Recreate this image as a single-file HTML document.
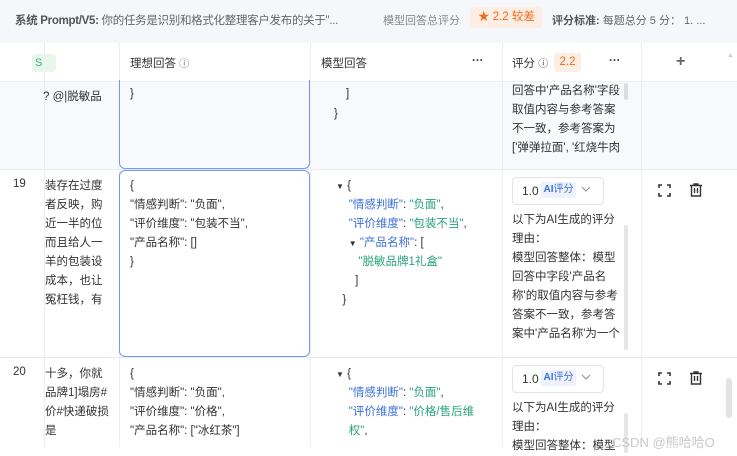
<!DOCTYPE html>
<html><head><meta charset="utf-8"><style>
*{margin:0;padding:0;box-sizing:border-box}
body{width:737px;height:447px;overflow:hidden;background:#fff;font-family:"Liberation Sans","Noto Sans CJK SC",sans-serif;font-size:11.5px;color:#333;position:relative}
.a{position:absolute;white-space:nowrap}
.top{position:absolute;left:0;top:0;width:737px;height:43px;background:#f5f7fa}
.vl{position:absolute;width:1px;background:#eceef2}
.hl{position:absolute;height:1px;background:#e8eaee}
.k{color:#3a6fd8}.v{color:#26a37a}
.ln{line-height:19px}
</style></head><body>
<div class="top"></div>
<div class="a" style="left:15px;top:12px;font-size:11.5px;color:#555;letter-spacing:-0.3px"><b style="color:#555">系统 Prompt/V5:</b> <span style="color:#666">你的任务是识别和格式化整理客户发布的关于"...</span></div>
<div class="a" style="left:383px;top:12px;font-size:11px;color:#888">模型回答总评分</div>
<div class="a" style="left:470px;top:7px;width:72px;height:21px;background:#fdeee3;border-radius:4px;color:#f06a1e;font-size:11.5px;line-height:21px;padding-left:8px;overflow:hidden">★ 2.2 较差</div>
<div class="a" style="left:552px;top:12px;font-size:11px;color:#555"><b>评分标准:</b> <span style="color:#666">每题总分 5 分：  1. ...</span></div>

<div class="a" style="left:0;top:43px;width:737px;height:38px;background:#fff"></div>
<div class="a" style="left:0;top:81px;width:737px;height:88px;background:#f8f9fb"></div>
<div class="hl" style="left:0;top:81px;width:737px;background:#f0f1f4"></div>
<div class="hl" style="left:0;top:169px;width:737px"></div>
<div class="hl" style="left:0;top:357px;width:737px"></div>
<div class="vl" style="left:44px;top:43px;height:404px"></div>
<div class="vl" style="left:119px;top:43px;height:404px"></div>
<div class="vl" style="left:310px;top:43px;height:404px"></div>
<div class="vl" style="left:502px;top:43px;height:404px"></div>
<div class="vl" style="left:641px;top:43px;height:404px"></div>

<div class="a" style="left:32px;top:54px;width:24px;height:18px;background:#e8f6ee;border-radius:3px;color:#36b37e;font-size:11px;line-height:18px;padding-left:3px">S</div>
<div class="a" style="left:130px;top:55px">理想回答 <span style="font-size:10px;color:#666">ⓘ</span></div>
<div class="a" style="left:321px;top:55px">模型回答</div>
<div class="a" style="left:472px;top:55px;font-weight:bold">···</div>
<div class="a" style="left:512px;top:55px">评分 <span style="font-size:10px">ⓘ</span></div>
<div class="a" style="left:554px;top:53px;width:27px;height:19px;background:#fdeee3;border-radius:3px;color:#f06a1e;line-height:19px;text-align:center">2.2</div>
<div class="a" style="left:609px;top:55px;font-weight:bold">···</div>
<div class="a" style="left:676px;top:53px;font-size:16px;color:#666;font-weight:bold">+</div>
<div class="a" style="left:727px;top:52px;font-size:7px;color:#ccc">▲</div>

<div class="a" style="left:43px;top:88px">? @|脱敏品</div>
<div class="a" style="left:119px;top:80px;width:191px;height:89px;border:1.5px solid #6f9cf0;border-top:none;border-radius:0 0 6px 6px"></div>
<div class="a" style="left:130px;top:88px">}</div>
<div class="a" style="left:346px;top:88px">]</div>
<div class="a" style="left:334px;top:108px">}</div>
<div class="a ln" style="left:512px;top:82px">回答中'产品名称'字段<br>取值内容与参考答案<br>不一致，参考答案为<br>['弹弹拉面', '红烧牛肉</div>
<div class="a" style="left:624px;top:83px;width:4px;height:17px;background:#ddd;border-radius:2px"></div>

<div class="a" style="left:13px;top:178px">19</div>
<div class="a ln" style="left:45px;top:177px;width:74px;overflow:hidden">装存在过度<br>者反映，购<br>近一半的位<br>而且给人一<br>羊的包装设<br>成本，也让<br>冤枉钱，有</div>
<div class="a" style="left:119px;top:170px;width:191px;height:187px;border:1.5px solid #6f9cf0;border-radius:6px"></div>
<div class="a ln" style="left:130px;top:177px">{<br>"情感判断": "负面",<br>"评价维度": "包装不当",<br>"产品名称": []<br>}</div>
<div class="a ln" style="left:336px;top:177px"><span style="font-size:8px">▼</span> {<br>&nbsp;&nbsp;&nbsp;&nbsp;<span class="k">"情感判断"</span>: <span class="v">"负面"</span>,<br>&nbsp;&nbsp;&nbsp;&nbsp;<span class="k">"评价维度"</span>: <span class="v">"包装不当"</span>,<br>&nbsp;&nbsp;&nbsp;&nbsp;<span style="font-size:8px">▼</span> <span class="k">"产品名称"</span>: [<br>&nbsp;&nbsp;&nbsp;&nbsp;&nbsp;&nbsp;&nbsp;<span class="v">"脱敏品牌1礼盒"</span><br>&nbsp;&nbsp;&nbsp;&nbsp;&nbsp;&nbsp;]<br>&nbsp;&nbsp;}</div>
<div class="a" style="left:512px;top:177px;width:92px;height:28px;border:1px solid #e2e4e8;border-radius:4px"></div>
<div class="a" style="left:522px;top:184px;font-size:12px">1.0</div>
<div class="a" style="left:541px;top:182px;width:35px;height:16px;background:#eef2fd;color:#3a6fd8;font-size:10px;line-height:16px;text-align:center;border-radius:2px"><b>AI</b>评分</div>
<svg class="a" style="left:581px;top:186px" width="10" height="6" viewBox="0 0 10 6"><path d="M1 1l4 4 4-4" fill="none" stroke="#999" stroke-width="1.2"/></svg>
<div class="a ln" style="left:512px;top:211px">以下为AI生成的评分<br>理由：<br>模型回答整体：模型<br>回答中字段'产品名<br>称'的取值内容与参考<br>答案不一致，参考答<br>案中'产品名称'为一个</div>
<div class="a" style="left:624px;top:225px;width:4px;height:125px;background:#e6e6e6;border-radius:2px"></div>
<svg class="a" style="left:658px;top:184px" width="13" height="13" viewBox="0 0 13 13"><path d="M1 4V1h3M9 1h3v3M12 9v3H9M4 12H1V9" fill="none" stroke="#333" stroke-width="1.6"/></svg>
<svg class="a" style="left:690px;top:183px" width="12" height="14" viewBox="0 0 12 14"><path d="M0 2.5h12M4 2.5V1h4v1.5M1.5 2.5h9V13h-9z M4.5 5v5M7.5 5v5" fill="none" stroke="#333" stroke-width="1.4"/></svg>

<div class="a" style="left:13px;top:366px">20</div>
<div class="a ln" style="left:45px;top:365px;width:74px;overflow:hidden">十多，你就<br>品牌1]塌房#<br>价#快递破损<br>是</div>
<div class="a ln" style="left:130px;top:365px">{<br>"情感判断": "负面",<br>"评价维度": "价格",<br>"产品名称": ["冰红茶"]</div>
<div class="a ln" style="left:336px;top:365px"><span style="font-size:8px">▼</span> {<br>&nbsp;&nbsp;&nbsp;&nbsp;<span class="k">"情感判断"</span>: <span class="v">"负面"</span>,<br>&nbsp;&nbsp;&nbsp;&nbsp;<span class="k">"评价维度"</span>: <span class="v">"价格/售后维</span><br>&nbsp;&nbsp;&nbsp;&nbsp;<span class="v">权"</span>,</div>
<div class="a" style="left:512px;top:365px;width:92px;height:28px;border:1px solid #e2e4e8;border-radius:4px"></div>
<div class="a" style="left:522px;top:372px;font-size:12px">1.0</div>
<div class="a" style="left:541px;top:370px;width:35px;height:16px;background:#eef2fd;color:#3a6fd8;font-size:10px;line-height:16px;text-align:center;border-radius:2px"><b>AI</b>评分</div>
<svg class="a" style="left:581px;top:374px" width="10" height="6" viewBox="0 0 10 6"><path d="M1 1l4 4 4-4" fill="none" stroke="#999" stroke-width="1.2"/></svg>
<div class="a ln" style="left:512px;top:399px">以下为AI生成的评分<br>理由：<br>模型回答整体：模型</div>
<div class="a" style="left:624px;top:413px;width:4px;height:40px;background:#e6e6e6;border-radius:2px"></div>
<svg class="a" style="left:658px;top:372px" width="13" height="13" viewBox="0 0 13 13"><path d="M1 4V1h3M9 1h3v3M12 9v3H9M4 12H1V9" fill="none" stroke="#333" stroke-width="1.6"/></svg>
<svg class="a" style="left:690px;top:371px" width="12" height="14" viewBox="0 0 12 14"><path d="M0 2.5h12M4 2.5V1h4v1.5M1.5 2.5h9V13h-9z M4.5 5v5M7.5 5v5" fill="none" stroke="#333" stroke-width="1.4"/></svg>
<div class="a" style="left:726px;top:378px;width:6px;height:40px;background:#e3e3e3;border-radius:3px"></div>
<div class="a" style="left:612px;top:432px;font-size:13px;color:#c8c8c8">CSDN @熊哈哈O</div>
</body></html>
